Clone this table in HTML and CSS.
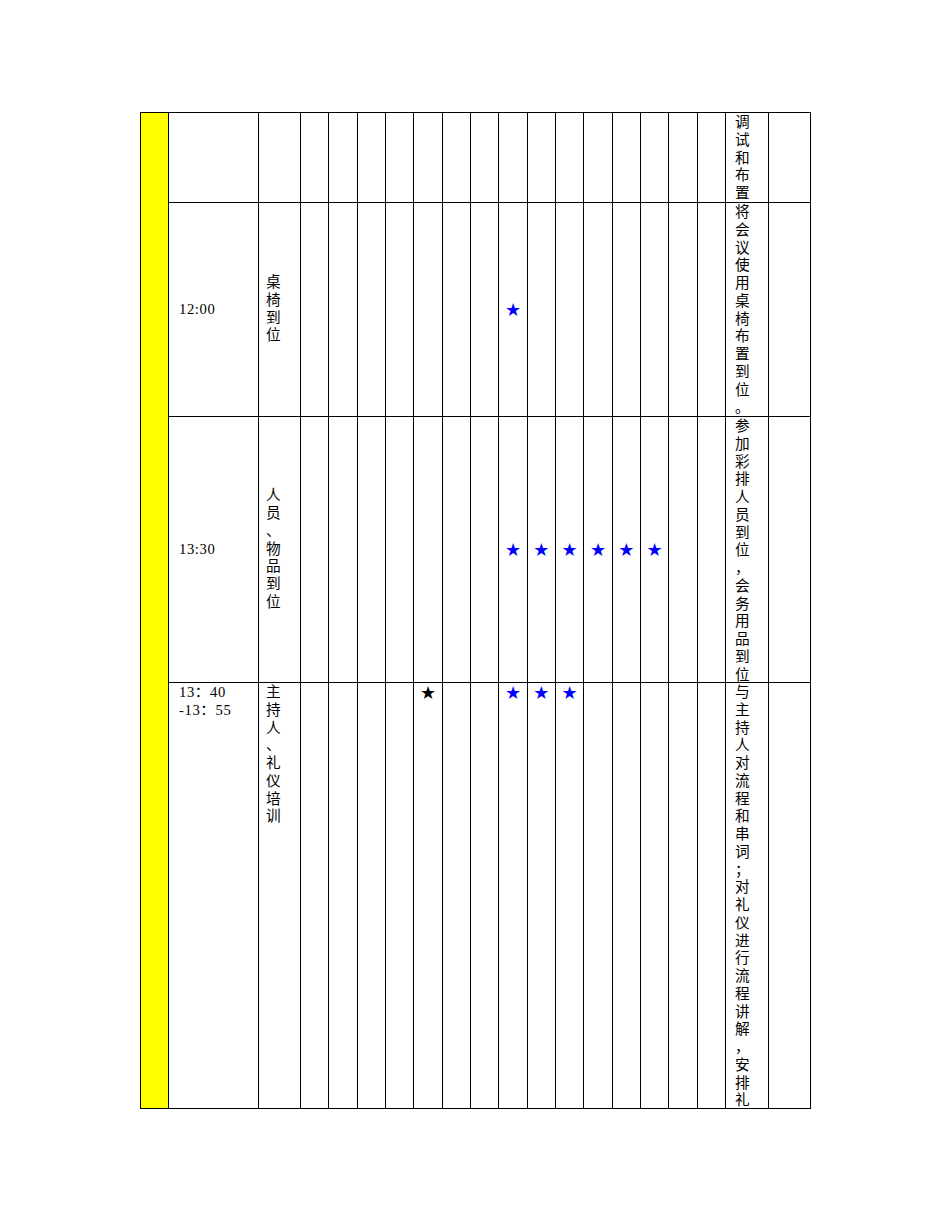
FILE: index.html
```html
<!DOCTYPE html>
<html lang="zh-CN">
<head>
<meta charset="utf-8">
<title>会议流程表</title>
<link rel="stylesheet" href="styles.css">
</head>
<body>
<div class="page">
  <div class="sheet">
    <div class="cell flag"></div>

    <!-- row 1 -->
    <div class="cell time"></div>
    <div class="cell task"></div>
    <div class="cell"></div><div class="cell"></div><div class="cell"></div><div class="cell"></div><div class="cell"></div>
    <div class="cell"></div><div class="cell"></div><div class="cell"></div><div class="cell"></div><div class="cell"></div>
    <div class="cell"></div><div class="cell"></div><div class="cell"></div><div class="cell"></div><div class="cell"></div>
    <div class="cell desc top"><div class="stack">调试和布置</div></div>
    <div class="cell"></div>

    <!-- row 2 -->
    <div class="cell time mid">12:00</div>
    <div class="cell task mid"><div class="stack">桌椅到位</div></div>
    <div class="cell"></div><div class="cell"></div><div class="cell"></div><div class="cell"></div><div class="cell"></div>
    <div class="cell"></div><div class="cell"></div>
    <div class="cell mark mid"><span class="star">★</span></div>
    <div class="cell"></div><div class="cell"></div>
    <div class="cell"></div><div class="cell"></div><div class="cell"></div><div class="cell"></div><div class="cell"></div>
    <div class="cell desc top"><div class="stack">将会议使用桌椅布置到位。</div></div>
    <div class="cell"></div>

    <!-- row 3 -->
    <div class="cell time mid">13:30</div>
    <div class="cell task mid"><div class="stack">人员、物品到位</div></div>
    <div class="cell"></div><div class="cell"></div><div class="cell"></div><div class="cell"></div><div class="cell"></div>
    <div class="cell"></div><div class="cell"></div>
    <div class="cell mark mid"><span class="star">★</span></div>
    <div class="cell mark mid"><span class="star">★</span></div>
    <div class="cell mark mid"><span class="star">★</span></div>
    <div class="cell mark mid"><span class="star">★</span></div>
    <div class="cell mark mid"><span class="star">★</span></div>
    <div class="cell mark mid"><span class="star">★</span></div>
    <div class="cell"></div><div class="cell"></div>
    <div class="cell desc top"><div class="stack">参加彩排人员到位，会务用品到位</div></div>
    <div class="cell"></div>

    <!-- row 4 -->
    <div class="cell time top">13：40<br>-13：55</div>
    <div class="cell task top"><div class="stack">主持人、礼仪培训</div></div>
    <div class="cell"></div><div class="cell"></div><div class="cell"></div><div class="cell"></div>
    <div class="cell mark top"><span class="star black">★</span></div>
    <div class="cell"></div><div class="cell"></div>
    <div class="cell mark top"><span class="star">★</span></div>
    <div class="cell mark top"><span class="star">★</span></div>
    <div class="cell mark top"><span class="star">★</span></div>
    <div class="cell"></div><div class="cell"></div><div class="cell"></div><div class="cell"></div><div class="cell"></div>
    <div class="cell desc top"><div class="stack">与主持人对流程和串词；对礼仪进行流程讲解，安排礼</div></div>
    <div class="cell"></div>
  </div>
</div>
</body>
</html>
```

FILE: styles.css
```css
html, body {
  margin: 0;
  padding: 0;
  background: #fff;
}

body {
  font-family: "Liberation Serif", "Noto Sans CJK SC", serif;
  font-size: 14.67px;
  line-height: 17.75px;
  color: #000;
}

.page {
  padding: 112px 0 0 140px;
}

.sheet {
  display: grid;
  box-sizing: border-box;
  width: 671px;
  border: 1px solid #000;
  background: #000;
  gap: 1px;
  grid-template-columns: 27px 89px 41px repeat(15, 1fr) 42px 41px;
  grid-template-rows: 89px 213px 265px 425px;
}

.cell {
  background: #fff;
  overflow: hidden;
  box-sizing: border-box;
}

.flag {
  grid-row: 1 / -1;
  background: #ffff00;
}

.mid {
  display: flex;
  align-items: center;
}

.top {
  padding-top: 1px;
}

.time {
  padding-left: 10px;
  white-space: nowrap;
  letter-spacing: 0.6px;
}

.task {
  padding-left: 7px;
}

.desc {
  padding-left: 9px;
}

.stack {
  width: 1em;
  word-break: break-all;
  line-break: anywhere;
}

.mark {
  display: flex;
  justify-content: center;
}

.star {
  font-family: "DejaVu Sans", sans-serif;
  font-size: 18px;
  line-height: 17.75px;
  color: #0000ff;
}

.star.black {
  color: #000;
}
```
